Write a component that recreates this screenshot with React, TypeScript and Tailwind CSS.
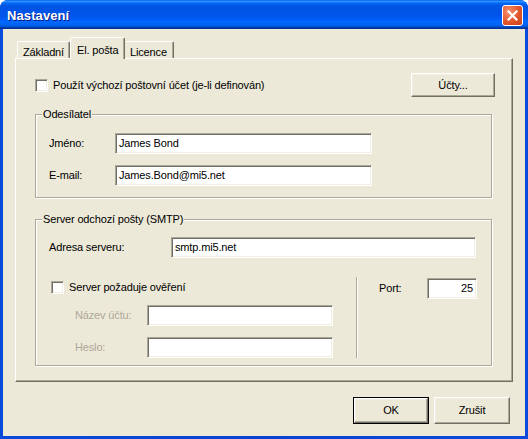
import React from "react";

const sunken =
  "bg-white border border-t-[#ACA899] border-l-[#ACA899] border-b-white border-r-white shadow-[inset_1px_1px_0_#716F64,inset_-1px_-1px_0_#F1EFE2]";
const raised =
  "bg-[#ECE9D8] border border-t-white border-l-white border-b-[#716F64] border-r-[#716F64] shadow-[inset_-1px_-1px_0_#ACA899,inset_1px_1px_0_#F1EFE2]";
const etched =
  "border border-[#ACA899] shadow-[inset_1px_1px_0_#FFFFFF,1px_1px_0_#FFFFFF]";

function Checkbox() {
  return <div className={`w-[13px] h-[13px] shrink-0 ${sunken}`} />;
}

function TextBox({ value, w, right }: { value?: string; w: string; right?: boolean }) {
  return (
    <div
      className={`${w} h-[21px] flex items-center px-[3px] ${right ? "justify-end" : ""} ${sunken}`}
    >
      <span className="leading-none">{value}</span>
    </div>
  );
}

export default function App() {
  return (
    <div className="w-[528px] h-[439px] bg-white">
      <div className="w-[528px] h-[439px] flex flex-col rounded-t-[8px] overflow-hidden bg-[linear-gradient(to_right,#0A4BDC,#0842D0_50%,#0A4BDC)] font-['Liberation_Sans',Arial,sans-serif] text-[11px] tracking-[-0.15px] text-black">
        {/* Title bar */}
        <div className="h-[29px] shrink-0 flex items-center justify-between pl-[7px] pr-[5px] bg-[linear-gradient(to_bottom,#0058EE_0%,#3593FF_4%,#288EFF_6%,#127DFF_8%,#036FFC_10%,#0262EE_14%,#0057E5_20%,#0054E3_24%,#0055EB_56%,#005BF5_66%,#026AFE_76%,#0062EF_86%,#0052D6_92%,#0040AB_94%,#003092_100%)]">
          <span className="pt-[3px] text-white font-bold text-[13px] tracking-[0.1px] [text-shadow:1px_1px_0_#0A1883]">
            Nastavení
          </span>
          <div className="w-[21px] h-[21px] mt-[2px] rounded-[3px] border border-white bg-[radial-gradient(circle_at_30%_30%,#F2906B,#E2562C_55%,#C8401B)] flex items-center justify-center">
            <svg width="11" height="11" viewBox="0 0 11 11">
              <path d="M1.5 1.5 L9.5 9.5 M9.5 1.5 L1.5 9.5" stroke="white" strokeWidth="2.2" strokeLinecap="square" />
            </svg>
          </div>
        </div>

        {/* Client area */}
        <div className="flex-1 mx-[3px] mb-[3px] bg-[#ECE9D8] flex flex-col">
          {/* Tabs */}
          <div className="pt-[8px] pl-[14px] flex items-end h-[29px] relative z-10">
            <div className="w-[53px] h-[17px] pl-[5px] pt-[2px] border border-b-0 border-t-white border-l-white border-r-[#716F64] shadow-[inset_-1px_0_0_#ACA899] rounded-t-[2px]">
              Základní
            </div>
            <div className="w-[55px] h-[22px] -mb-px pl-[6px] pt-[4px] bg-[#ECE9D8] border border-b-0 border-t-white border-l-white border-r-[#716F64] shadow-[inset_-1px_0_0_#ACA899] rounded-t-[2px]">
              El. pošta
            </div>
            <div className="w-[49px] h-[17px] pl-[5px] pt-[2px] border border-b-0 border-t-white border-l-0 border-r-[#716F64] shadow-[inset_-1px_0_0_#ACA899] rounded-t-[2px]">
              Licence
            </div>
          </div>

          {/* Tab panel */}
          <div className="ml-[12px] w-[498px] h-[324px] border border-t-white border-l-white border-b-[#716F64] border-r-[#716F64] shadow-[inset_-1px_-1px_0_#ACA899] pt-[14px] pl-[19px] pr-[20px]">
            {/* Row 1 */}
            <div className="h-[24px] flex items-center justify-between -mr-[3px]">
              <div className="flex items-center gap-[5px]">
                <Checkbox />
                <span>Použít výchozí poštovní účet (je-li definován)</span>
              </div>
              <div className={`w-[84px] h-[24px] flex items-center justify-center ${raised}`}>Účty...</div>
            </div>

            {/* Odesílatel */}
            <div className={`relative mt-[17px] h-[84px] ${etched} pt-[18px] pl-[13px]`}>
              <span className="absolute left-[6px] -top-[7px] px-[1px] bg-[#ECE9D8] leading-[13px]">Odesílatel</span>
              <div className="flex items-center">
                <span className="w-[66px]">Jméno:</span>
                <TextBox value="James Bond" w="w-[257px]" />
              </div>
              <div className="flex items-center mt-[11px]">
                <span className="w-[66px]">E-mail:</span>
                <TextBox value="James.Bond@mi5.net" w="w-[257px]" />
              </div>
            </div>

            {/* SMTP */}
            <div className={`relative mt-[21px] h-[147px] ${etched} pt-[17px] pl-[13px]`}>
              <span className="absolute left-[6px] -top-[7px] px-[1px] bg-[#ECE9D8] leading-[13px]">
                Server odchozí pošty (SMTP)
              </span>
              <div className="flex items-center">
                <span className="w-[122px]">Adresa serveru:</span>
                <TextBox value="smtp.mi5.net" w="w-[305px]" />
              </div>
              <div className="flex mt-[19px]">
                <div className="w-[307px] pt-[2px]">
                  <div className="flex items-center gap-[5px] ml-[2px]">
                    <Checkbox />
                    <span>Server požaduje ověření</span>
                  </div>
                  <div className="flex items-center mt-[9px] ml-[26px]">
                    <span className="w-[72px] text-[#ACA899]">Název účtu:</span>
                    <TextBox w="w-[186px]" />
                  </div>
                  <div className="flex items-center mt-[11px] ml-[26px]">
                    <span className="w-[72px] text-[#ACA899]">Heslo:</span>
                    <TextBox w="w-[186px]" />
                  </div>
                </div>
                <div className="w-[2px] h-[81px] border-l border-l-[#ACA899] border-r border-r-white" />
                <div className="pl-[21px] pt-[1px]">
                  <div className="flex items-center">
                    <span className="w-[48px]">Port:</span>
                    <TextBox value="25" w="w-[50px]" right />
                  </div>
                </div>
              </div>
            </div>
          </div>

          {/* Bottom buttons */}
          <div className="mt-[15px] flex justify-end gap-[5px] pr-[15px]">
            <div className="w-[76px] h-[27px] border border-black">
              <div className={`w-full h-full flex items-center justify-center ${raised}`}>OK</div>
            </div>
            <div className={`w-[76px] h-[27px] flex items-center justify-center ${raised}`}>Zrušit</div>
          </div>
        </div>
      </div>
    </div>
  );
}
